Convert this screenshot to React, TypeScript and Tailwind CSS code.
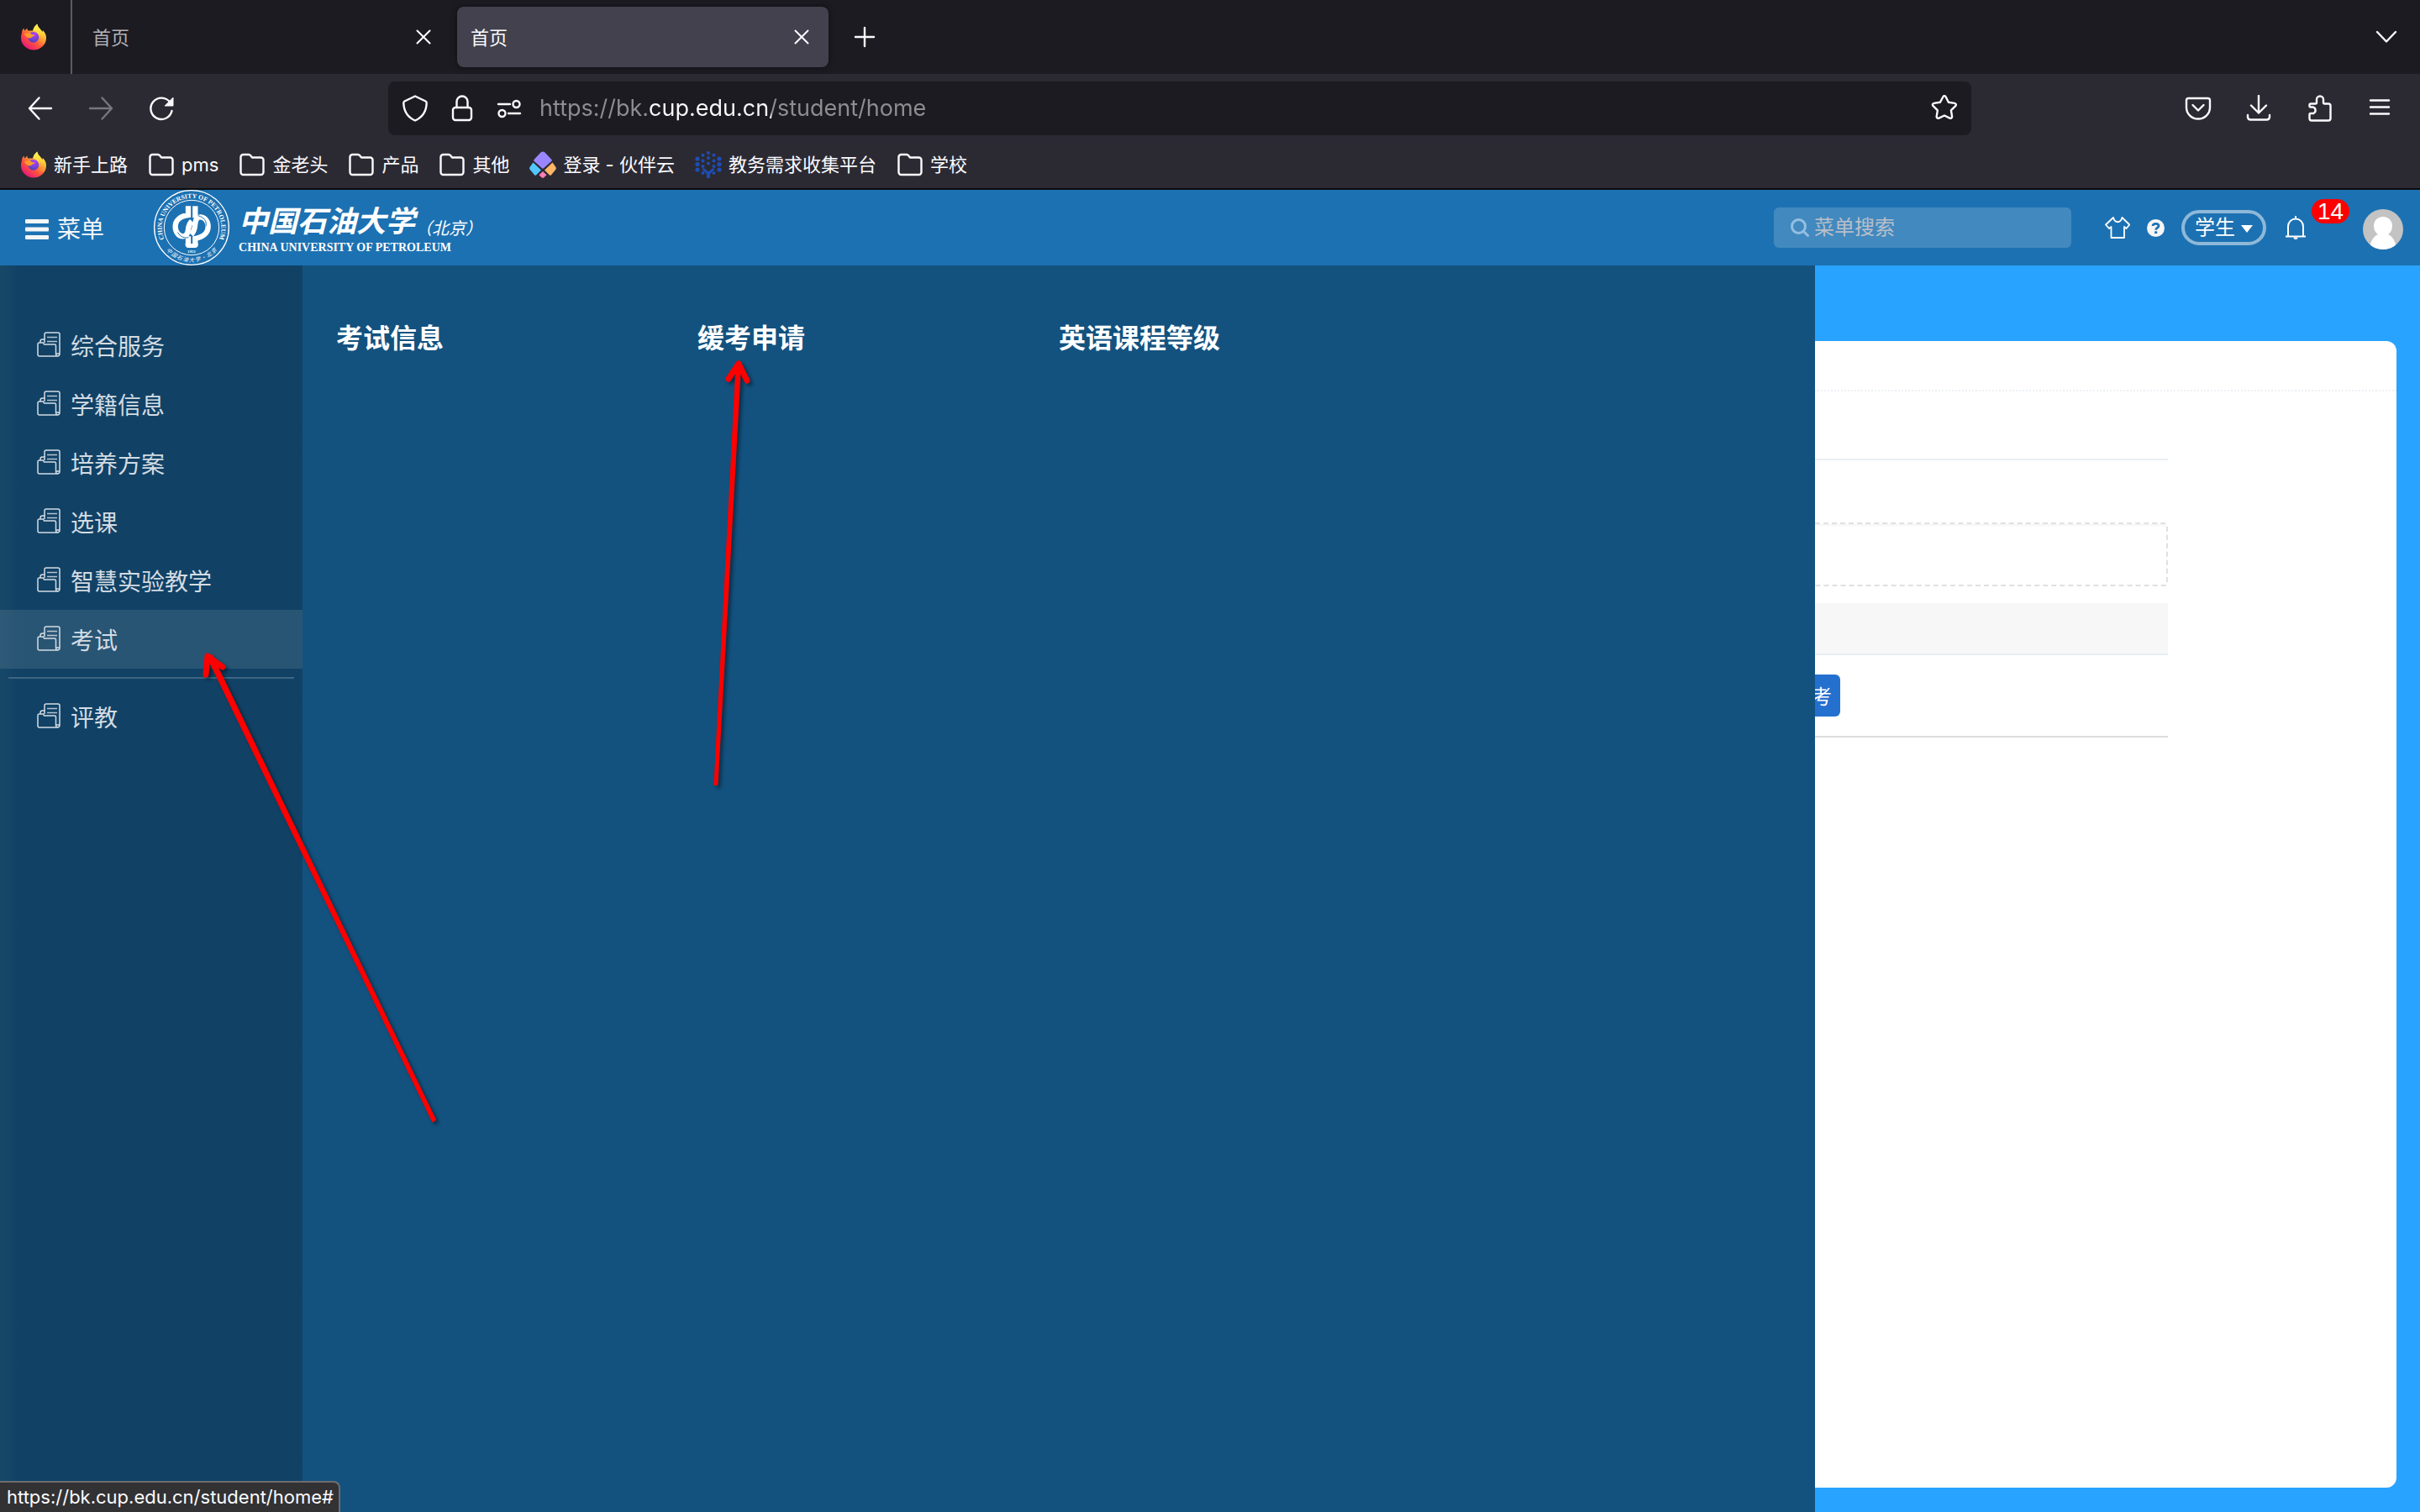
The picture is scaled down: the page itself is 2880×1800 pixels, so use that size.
import { useState } from "react";
import type { ReactNode } from "react";

const menuItems = ["综合服务", "学籍信息", "培养方案", "选课", "智慧实验教学", "考试"];
const subMenus = ["考试信息", "缓考申请", "英语课程等级"];

const bookmarks = [
  { title: "新手上路", icon: FirefoxIcon },
  { title: "pms", icon: FolderIcon },
  { title: "金老头", icon: FolderIcon },
  { title: "产品", icon: FolderIcon },
  { title: "其他", icon: FolderIcon },
  { title: "登录 - 伙伴云", icon: PartnerIcon },
  { title: "教务需求收集平台", icon: TreeIcon },
  { title: "学校", icon: FolderIcon }
];

// Line icon on a 32px grid, used for all the browser buttons
function Glyph({ children }: { children: ReactNode }) {
  return (
    <svg
      viewBox="0 0 32 32"
      fill="none"
      stroke="currentColor"
      strokeWidth="2.4"
      strokeLinecap="round"
      strokeLinejoin="round"
      className="size-8 shrink-0"
    >
      {children}
    </svg>
  );
}

function FirefoxIcon() {
  return (
    <svg viewBox="0 0 32 32" className="size-8 shrink-0">
      <defs>
        <linearGradient id="fx-body" x1="0.85" y1="0.1" x2="0.2" y2="0.95">
          <stop offset="0.05" stopColor="#fff44f" />
          <stop offset="0.35" stopColor="#ffa436" />
          <stop offset="0.65" stopColor="#ff4f3f" />
          <stop offset="1" stopColor="#e3157f" />
        </linearGradient>
        <radialGradient id="fx-globe" cx="0.6" cy="0.2" r="0.9">
          <stop offset="0" stopColor="#b13ff5" />
          <stop offset="0.5" stopColor="#7a43e0" />
          <stop offset="1" stopColor="#4b3fb0" />
        </radialGradient>
        <linearGradient id="fx-tail" x1="0.4" y1="0" x2="0.6" y2="1">
          <stop offset="0" stopColor="#fff44f" />
          <stop offset="0.6" stopColor="#ffd03a" />
          <stop offset="1" stopColor="#ff8a2a" />
        </linearGradient>
      </defs>
      <path
        fill="url(#fx-body)"
        d="M2 11C2 8 3.500 6.500 4.500 5.500 4.500 7 5 8 5.500 8.500 6.500 7 8 6 8.500 5.500 8.300 7 8.700 8 9.500 8.500H15C16 5 18 2 20.500 0.500 20.500 4 23 5 25 8 26 9 26.300 10 26.500 11 27 10 27 9 26.800 8 30 11 31 14 31 17A15 14.500 0 0 1 1 17C1 15 1.300 13 2 11Z"
      />
      <path
        fill="url(#fx-tail)"
        d="M20.500 .5C17 3 15.500 6 15.600 8.500 19 9 22 12 22.500 16 23.500 15 23.500 13 23 11.500 26 14 26.500 19 23 23 28 20.500 30 15 26.800 8.500 26.500 9.500 26.300 10 26.300 11 25 6 20.500 5 20.500 .5Z"
      />
      <circle cx="15.800" cy="16.300" r="6.400" fill="url(#fx-globe)" />
      <path
        fill="#ff9a2b"
        d="M5 13C8 10 12 11 14 13 15 13.300 17 13.200 17.300 13.800 17 15.500 14.500 15.500 13.500 16.500 12.500 18 11 17.500 9.500 17 8 16 6 15 5 13Z"
      />
    </svg>
  );
}

function FolderIcon() {
  return (
    <Glyph>
      <path d="M2.500 25V7a3 3 0 0 1 3-3h6.500c1 0 1.600.4 2.300 1.200l1.700 2.300H26.500a3 3 0 0 1 3 3V25a3 3 0 0 1-3 3H5.500a3 3 0 0 1-3-3Z" />
    </Glyph>
  );
}

function PartnerIcon() {
  return (
    <svg viewBox="0 0 32 32" className="size-8 shrink-0">
      <path fill="#9a86ff" d="M13.500 1.500C15 0 17 0 18.500 1.500L26.500 10C27 10.600 27 11.200 26.500 11.800L17 20.300C16.400 20.900 15.600 20.900 15 20.300L5.500 11.800C5 11.200 5 10.600 5.500 10Z" />
      <path fill="#52c7ff" d="M4.500 13.500L14 22.500 8 28.500C7.400 29 6.700 29 6.200 28.400L.8 22C0 21 0 20 .5 19Z" />
      <path fill="#ffb765" d="M27.500 13.500L18 22.500 24 28.500C24.600 29 25.300 29 25.800 28.400L31.200 22C32 21 32 20 31.500 19Z" />
      <path fill="#ff7db8" d="M16 24L20.500 28.300 17.200 31.400C16.500 32 15.500 32 14.800 31.400L11.500 28.300Z" />
    </svg>
  );
}

const treeDots = [
  [16, 2], [9.500, 4.800], [22.500, 4.800], [3, 9], [16, 8], [29, 9], [9.500, 11.500], [22.500, 11.500],
  [3, 15.500], [16, 14.500], [29, 15.500], [9.500, 18], [22.500, 18], [3, 22], [29, 22], [9.500, 26], [22.500, 26]
];

function TreeIcon() {
  return (
    <svg viewBox="0 0 32 32" className="size-8 shrink-0" fill="#1e4db4">
      {treeDots.map(([x, y]) => (
        <circle key={`${x}-${y}`} cx={x} cy={y} r={x < 4 || x > 28 ? 2.600 : 2} />
      ))}
      <path d="M14 32V27L8.500 21.500 10.500 20 16 24.500 21.500 20 23.500 21.500 18 27V32Z" />
    </svg>
  );
}

function DocIcon() {
  return (
    <svg viewBox="0 0 28 30" className="h-[30px] w-7 shrink-0" fill="none" stroke="currentColor" strokeWidth="1.500">
      <path d="M9 9V3a2 2 0 0 1 2-2h14a2 2 0 0 1 2 2v23a3 3 0 0 1-3 3" />
      <path d="M12 6.500h12M12 11.500h12" opacity="0.850" />
      <path d="M4 13v-1.500A2.500 2.500 0 0 1 6.500 9H9v4" />
      <path d="M7.500 13 8.500 15H21a1.500 1.500 0 0 1 1.500 1.500V26c0 1.800.8 3 2 3H3a2 2 0 0 1-2-2V14.500A1.500 1.500 0 0 1 2.500 13Z" />
      <path d="M22.500 26H27" />
    </svg>
  );
}

function Emblem() {
  return (
    <svg viewBox="0 0 270 270" className="size-[90px] shrink-0" fill="none" stroke="#fff">
      <defs>
        <path id="ring-top" d="M44 190A106 106 0 1 1 226 190" />
        <path id="ring-bottom" d="M31 197A120 120 0 0 0 239 197" />
      </defs>
      <circle cx="135" cy="135" r="133" strokeWidth="4" />
      <circle cx="135" cy="135" r="98" strokeWidth="3" />
      <g fill="#fff" stroke="none" textAnchor="middle">
        <text fontSize="23" fontWeight="700" className="font-['Liberation_Serif',serif]">
          <textPath href="#ring-top" startOffset="50%">CHINA UNIVERSITY OF PETROLEUM</textPath>
        </text>
        <text fontSize="19" fontStyle="italic" className="font-['Noto_Sans_CJK_SC',sans-serif]">
          <textPath href="#ring-bottom" startOffset="50%">中 国 石 油 大 学 · 北 京</textPath>
        </text>
        <text x="135" y="224" fontSize="14" fontWeight="700" className="font-['Liberation_Serif',serif]">1953</text>
      </g>
      <g strokeWidth="19">
        <path d="M123 58V90C92 94 77 110 77 131C77 152 90 166 104 166C118 166 122 154 123 142C124 128 128 120 136 112" />
        <path d="M148 58V100" />
        <path d="M148 198V174C178 168 194 152 194 131C194 110 180 97 166 97C152 97 149 108 148 120C147 136 143 150 134 160" />
        <path d="M123 198V166" />
      </g>
      <path d="M113 192H158V196C158 204 154 207 148 207H123C117 207 113 204 113 196Z" fill="#fff" stroke="none" />
      <path d="M158 92C180 98 190 112 186 130M86 152C94 168 110 174 124 170" stroke="#1c71b2" strokeWidth="3" />
    </svg>
  );
}

function Logo() {
  return (
    <a href="#home" className="flex items-center gap-[11px] text-white">
      <Emblem />
      <span className="flex flex-col">
        <span className="flex items-end font-['Noto_Sans_CJK_SC',sans-serif] italic">
          <span className="text-[35px] leading-[48px] font-bold">中国石油大学</span>
          <span className="text-[20px] leading-7">（北京）</span>
        </span>
        <span className="font-['Liberation_Serif',serif] text-[14px] leading-5 font-bold">
          CHINA UNIVERSITY OF PETROLEUM
        </span>
      </span>
    </a>
  );
}

function TabBar() {
  return (
    <div className="flex h-[88px] items-center bg-[#1c1b22] text-[#fbfbfe]">
      <div className="flex h-full w-[86px] items-center border-r-2 border-[#5b5b60] pl-6">
        <FirefoxIcon />
      </div>
      <Tab title="首页" />
      <Tab title="首页" active />
      <button aria-label="新建标签页" className="ml-[27px]">
        <Glyph>
          <path d="M16 5v22M5 16h22" />
        </Glyph>
      </button>
      <button aria-label="列出所有标签页" className="mr-6 ml-auto">
        <Glyph>
          <path d="m5 10 11 11.500L27 10" />
        </Glyph>
      </button>
    </div>
  );
}

function Tab({ title, active = false }: { title: string; active?: boolean }) {
  return (
    <div
      className={
        active
          ? "ml-4 flex h-[72px] w-[442px] items-center justify-between rounded-lg bg-[#42414d] pr-4 pl-4 text-[#fbfbfe] shadow-[0_0_6px_rgba(0,0,0,0.5)]"
          : "flex h-[72px] w-[442px] items-center justify-between pr-2 pl-6 text-[#b2b1b6]"
      }
    >
      <button className="pt-0.5 text-[22px] leading-8">{title}</button>
      <button aria-label="关闭标签页" className="text-[#fbfbfe]">
        <Glyph>
          <path d="m8.500 8.500 15 15M23.500 8.500l-15 15" strokeWidth="2" />
        </Glyph>
      </button>
    </div>
  );
}

function NavBar() {
  return (
    <div className="flex h-[82px] items-center bg-[#2b2a33] text-[#fbfbfe]">
      <div className="flex w-[462px] shrink-0 gap-10 pl-8">
        <button aria-label="后退">
          <Glyph>
            <path d="M29 16H3M14.500 3.500 3 16l11.500 12.500" />
          </Glyph>
        </button>
        <button aria-label="前进" disabled className="text-[#77767c]">
          <Glyph>
            <path d="M3 16h26M17.500 3.500 29 16 17.500 28.500" />
          </Glyph>
        </button>
        <button aria-label="刷新">
          <Glyph>
            <path d="M28.500 19A12.700 12.700 0 1 1 26.500 9" />
            <path d="M30 3.500V13h-9.500Z" fill="currentColor" strokeWidth="1" />
          </Glyph>
        </button>
      </div>
      <div className="flex h-16 grow items-center rounded-lg bg-[#1c1b22] pr-4 pl-4">
        <button aria-label="跟踪保护">
          <Glyph>
            <path d="M16 1.500 28.500 7.500c1 .5 1.200 1 1.200 2C29.500 18 26 26 16 30.500 6 26 2.500 18 2.300 9.500c0-1 .2-1.500 1.200-2Z" />
          </Glyph>
        </button>
        <button aria-label="安全连接" className="ml-6">
          <Glyph>
            <rect x="5" y="15" width="22" height="15" rx="3" />
            <path d="M9.500 15V8a6.500 6.500 0 0 1 13 0v7" />
          </Glyph>
        </button>
        <button aria-label="网站权限" className="ml-6">
          <Glyph>
            <path d="M3 11h14M15 22h14" />
            <circle cx="24.500" cy="11" r="4" />
            <circle cx="7.500" cy="22" r="4" />
          </Glyph>
        </button>
        {/* host name is drawn brighter than the rest of the address */}
        <input
          aria-label="地址"
          defaultValue="https://bk.cup.edu.cn/student/home"
          className="ml-5 min-w-0 grow bg-[linear-gradient(90deg,#8e8e92_131px,#fbfbfe_131px,#fbfbfe_276px,#8e8e92_276px)] bg-clip-text font-['Inter','Noto_Sans_CJK_SC',sans-serif] text-[27px] leading-10 text-transparent outline-none"
        />
        <button aria-label="添加书签">
          <Glyph>
            <path d="M14.400 2.200c.7-1.400 2.500-1.400 3.200 0l3.300 6.600 7.300 1.100c1.600.2 2.200 2.100 1 3.200l-5.300 5.200 1.200 7.300c.3 1.600-1.400 2.700-2.800 2L16 24.500l-6.500 3.100c-1.400.7-3.100-.4-2.800-2l1.200-7.300-5.300-5.200c-1.200-1.100-.6-3 1-3.200l7.300-1.100Z" />
          </Glyph>
        </button>
      </div>
      <div className="flex w-[534px] shrink-0 justify-end gap-10 pr-8">
        <button aria-label="保存到 Pocket">
          <Glyph>
            <path d="M4.500 4h23a2.500 2.500 0 0 1 2.500 2.500V15a14 13.500 0 0 1-28 0V6.500A2.500 2.500 0 0 1 4.500 4Z" />
            <path d="m9.500 12 6.500 6.500 6.500-6.500" />
          </Glyph>
        </button>
        <button aria-label="下载">
          <Glyph>
            <path d="M16 1v20.500M7 12.500l9 9 9-9M3 24v2.500A3.500 3.500 0 0 0 6.500 29.500h19a3.500 3.500 0 0 0 3.500-3V24" />
          </Glyph>
        </button>
        <button aria-label="扩展">
          <Glyph>
            <path d="M6 10.500h5.500A1.500 1.500 0 0 0 13 9V5.500a4 4 0 0 1 8 0V9a1.500 1.500 0 0 0 1.500 1.500H27a2.500 2.500 0 0 1 2.500 2.500v15a2.500 2.500 0 0 1-2.500 2.500H7A2.500 2.500 0 0 1 4.500 28v-4.500A1.500 1.500 0 0 1 6 22h3a4 4 0 0 0 0-7.500H6A1.500 1.500 0 0 1 4.500 13v-1A1.500 1.500 0 0 1 6 10.500Z" />
          </Glyph>
        </button>
        <button aria-label="打开应用程序菜单">
          <Glyph>
            <path d="M5 6.500h22M5 14.500h22M5 22.500h22" />
          </Glyph>
        </button>
      </div>
    </div>
  );
}

function BookmarkBar() {
  return (
    <nav className="flex h-[56px] items-center gap-6 border-b-2 border-[#0c0c0d] bg-[#2b2a33] pb-0.5 pl-6 text-[22px] leading-8 text-[#fbfbfe]">
      {bookmarks.map((item) => (
        <a key={item.title} href="#bookmark" className="flex items-center gap-2">
          <item.icon />
          {item.title}
        </a>
      ))}
    </nav>
  );
}

function Header() {
  return (
    <header className="flex h-[90px] items-center bg-[#1c71b2] text-white">
      <button className="mr-[59px] ml-[30px] flex items-center gap-2.5 pt-1 text-[28px] leading-10 text-[#f4f5f7]">
        <svg viewBox="0 0 28 24" className="h-6 w-7" fill="currentColor">
          <rect width="28" height="5" rx="1" />
          <rect y="9.500" width="28" height="5" rx="1" />
          <rect y="19" width="28" height="5" rx="1" />
        </svg>
        菜单
      </button>
      <Logo />
      <label className="ml-auto flex h-12 w-[354px] items-center gap-1.5 rounded-md bg-white/17 pl-5">
        <svg viewBox="0 0 22 22" className="size-[22px] shrink-0" fill="none" stroke="#94bfe2" strokeWidth="3" strokeLinecap="round">
          <circle cx="9.500" cy="9.500" r="8" />
          <path d="m15.500 15.500 5 5" />
        </svg>
        <input
          placeholder="菜单搜索"
          aria-label="菜单搜索"
          className="w-full min-w-0 bg-transparent text-2xl leading-8 outline-none placeholder:text-[#b9bfc9]"
        />
      </label>
      <button aria-label="换肤" className="ml-10">
        <svg viewBox="0 0 30 26" className="h-[26px] w-[30px]" fill="none" stroke="currentColor" strokeWidth="1.800" strokeLinejoin="round">
          <path d="M10 1 1 9.500 5 14 7.500 12V25h15.500V12L25.500 14 29.300 9.500 20.500 1C18.500 8 12 8 10 1Z" />
        </svg>
      </button>
      <button aria-label="帮助" className="ml-5">
        <svg viewBox="0 0 21 21" className="size-[21px]">
          <circle cx="10.500" cy="10.500" r="10.500" fill="#f5f5f5" />
          <path d="M7 8C7.300 4.500 14 4.500 14 8 14 10.300 10.700 10 10.700 12.700" fill="none" stroke="#1c71b2" strokeWidth="2.800" />
          <rect x="9.200" y="14.300" width="3" height="2.800" fill="#1c71b2" />
        </svg>
      </button>
      <div className="relative ml-5">
        <select
          aria-label="角色"
          className="block h-[42px] w-[101px] appearance-none rounded-full border-4 border-white/50 bg-transparent pl-3 text-2xl leading-8 text-white outline-none"
        >
          <option>学生</option>
        </select>
        <svg viewBox="0 0 14 9" className="pointer-events-none absolute top-[18px] right-4 h-[9px] w-3.5" fill="#fff">
          <path d="M0 0h14L7 9Z" />
        </svg>
      </div>
      <button aria-label="消息" className="relative ml-[23px]">
        <svg viewBox="0 0 24 28" className="h-7 w-6" fill="none" stroke="currentColor" strokeWidth="2">
          <path d="M0 24.500h24M3 24V12.500a9 9 0 0 1 18 0V24M12 0v3.500" />
          <path d="M9.500 25.500a2.500 2.500 0 0 0 5 0Z" fill="currentColor" stroke="none" />
        </svg>
        <span className="absolute -top-5 left-[31px] h-[29px] w-[45px] rounded-full bg-[#fe0000] text-center font-['Liberation_Sans',sans-serif] text-[28px] leading-[30px]">
          14
        </span>
      </button>
      <button aria-label="个人中心" className="mr-5 ml-[68px] pt-1">
        <svg viewBox="0 0 48 48" className="size-12 rounded-full">
          <rect width="48" height="48" fill="#c3c3c3" />
          <path d="M24 9c7 0 11 5 11 11 0 4.500-2 8-5 10 5 2 9 8 10.500 18h-33C9 38 13 32 18 30c-3-2-5-5.500-5-10 0-6 4-11 11-11Z" fill="#fff" />
        </svg>
      </button>
    </header>
  );
}

function MenuEntry({ title, active, onSelect }: { title: string; active: boolean; onSelect: () => void }) {
  return (
    <button
      onClick={onSelect}
      className={`flex h-[70px] items-start gap-3 pt-[19px] pl-11 text-[28px] leading-9 text-[#d3dce3] ${active ? "bg-white/10" : ""}`}
    >
      <DocIcon />
      {title}
    </button>
  );
}

function Content() {
  return (
    <main className="flex min-w-0 grow flex-col bg-[#28a3ff] pt-[90px] pr-7 pb-[29px]">
      <section className="grow rounded-r-xl bg-white">
        <div className="h-[60px] border-b-2 border-dotted border-[#edf0f4]" />
        <div className="pr-[272px]">
          <div className="h-[82px] border-b-2 border-[#e8eef3]" />
          <div className="mt-[74px] h-[76px] rounded-r-sm border-2 border-l-0 border-dashed border-[#e0e0e0] shadow-[inset_0_2px_2px_rgba(0,0,0,0.04)]" />
          <div className="mt-5 h-[62px] border-b-2 border-[#e8eef3] bg-[#f7f7f7]" />
          <div className="flex h-[98px] items-center border-b-2 border-[#dddddd]">
            <button className="flex h-[50px] w-[30px] items-center justify-end overflow-hidden rounded-r-md bg-[#2470cf] pt-1 pr-2.5 text-2xl leading-8 text-white">
              <span className="shrink-0">考</span>
            </button>
          </div>
        </div>
      </section>
    </main>
  );
}

// Hand-drawn pointers over the page: menu entry and submenu entry
function Arrows() {
  return (
    <svg
      viewBox="0 0 1000 1400"
      className="pointer-events-none absolute top-0 left-0 h-[1400px] w-[1000px] drop-shadow-[3px_3px_2px_rgba(0,0,0,0.45)]"
      fill="#fe0000"
      stroke="#fe0000"
      strokeLinecap="round"
      strokeLinejoin="round"
    >
      <path d="M876.500 436 850.500 934 853.500 934 881 436Z" strokeWidth="2" />
      <path d="M867 451 879 433 889 453" fill="none" strokeWidth="7" />
      <path d="M247 782 515 1335 518 1333 252 780Z" strokeWidth="2" />
      <path d="M245 803 247 781 265 794" fill="none" strokeWidth="7" />
    </svg>
  );
}

export default function App() {
  const [active, setActive] = useState("考试");

  return (
    <div className="relative flex min-h-screen flex-col overflow-hidden font-['Inter','Noto_Sans_CJK_SC',sans-serif]">
      <TabBar />
      <NavBar />
      <BookmarkBar />
      <Header />
      <div className="flex grow">
        <nav className="flex w-[360px] shrink-0 flex-col bg-[#114266] bg-linear-to-r from-[#184868] to-[#114266] to-6% pt-[60px]">
          {menuItems.map((title) => (
            <MenuEntry key={title} title={title} active={active === title} onSelect={() => setActive(title)} />
          ))}
          <hr className="mx-2.5 mt-2.5 mb-2.5 border-t-2 border-[#3f6582]" />
          <MenuEntry title="评教" active={active === "评教"} onSelect={() => setActive("评教")} />
        </nav>
        <div className="flex w-[62.5%] shrink-0 items-start bg-[#13527f] pt-[62px] pl-10">
          {subMenus.map((title) => (
            <a key={title} href="#submenu" className="w-[430px] text-[32px] leading-[50px] font-bold text-white">
              {title}
            </a>
          ))}
        </div>
        <Content />
      </div>
      <Arrows />
      <div className="absolute bottom-0 left-0 rounded-tr-lg border-t-2 border-r-2 border-[#6d6d70] bg-[#323234] pr-1.5 pl-2 text-[22px] leading-[35px] text-[#fbfbfe]">
        https://bk.cup.edu.cn/student/home#
      </div>
    </div>
  );
}
